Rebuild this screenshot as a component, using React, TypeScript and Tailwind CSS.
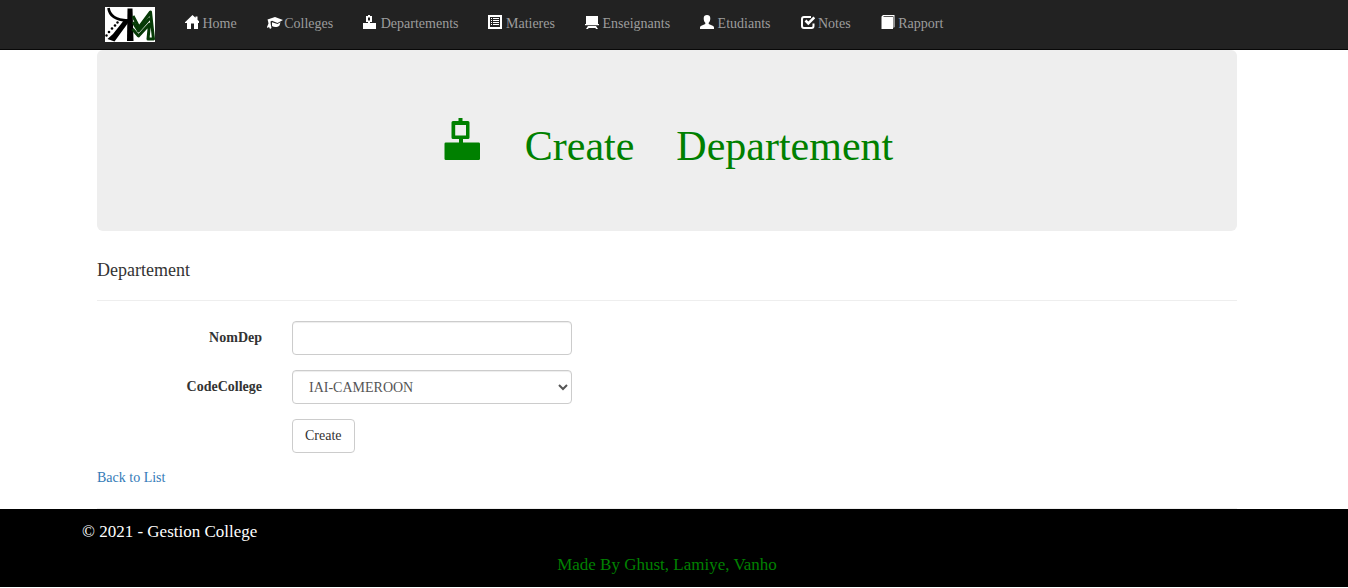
import type { ReactNode } from "react";

function Glyph({ children }: { children: ReactNode }) {
  return (
    <svg viewBox="0 0 14 14" className="mt-px h-3.5 w-3.5 shrink-0 text-white" fill="currentColor" aria-hidden="true">
      {children}
    </svg>
  );
}

const stampOutline =
  "M17.5 0h4v3h5.500a1.500 1.500 0 0 1 1.500 1.500v15a1.500 1.500 0 0 1-1.500 1.500h-5v3.500h15.700a1.300 1.300 0 0 1 1.300 1.300v14.900a1.300 1.300 0 0 1-1.300 1.300h-32.900a1.300 1.300 0 0 1-1.300-1.300v-14.900a1.300 1.300 0 0 1 1.300-1.300h13.200v-3.500h-6a1.500 1.500 0 0 1-1.500-1.500v-15a1.500 1.500 0 0 1 1.500-1.500h5.500zM14.200 7v10.500h10.800v-10.500z";

const links: { label: string; icon: ReactNode }[] = [
  {
    label: "Home",
    icon: (
      <Glyph>
        <path d="M7.500 0 10.500 2.700V1.500H12.500V4.700L15 7.300V8H13v6H9V8.500H6V14H2V8H0V7.300z" />
      </Glyph>
    ),
  },
  {
    label: "Colleges",
    icon: (
      <svg viewBox="0 0 17 14" className="mt-px -mr-[3px] h-3.5 w-[17px] shrink-0 text-white" fill="currentColor" aria-hidden="true">
        <path d="M.5 4.500 8 2l8 3-5.500 3L5 5.800 3.500 6.600l.3 2.900L4.500 13 3 14l-1-2-1.500 1-.5-1 1.500-3.500L1 6z" />
        <path d="M5 7.300 10.500 9 13.500 7.300 12.500 10.500C10.500 12.500 7 12.500 5 11z" />
      </svg>
    ),
  },
  {
    label: "Departements",
    icon: (
      <Glyph>
        <path fillRule="evenodd" d="M5 0h2v1h2v6H7v1h6v6H0V8h5V7H3V1h2zM5 2.500v3h2v-3z" />
      </Glyph>
    ),
  },
  {
    label: "Matieres",
    icon: (
      <Glyph>
        <path
          fillRule="evenodd"
          d="M0 0h14v14H0zM2 2v10h10V2zM3 3h1v1H3zM5 3h6v1H5zM3 5h1v1H3zM5 5h6v1H5zM3 7h1v1H3zM5 7h6v1H5zM3 9h1v1H3zM5 9h6v1H5z"
        />
      </Glyph>
    ),
  },
  {
    label: "Enseignants",
    icon: (
      <Glyph>
        <path d="M1 1h12v8H1zM0 9h14v1.300H0zM3 11h8l2 3h-2l-.6-1H3.600L3 14H1z" />
      </Glyph>
    ),
  },
  {
    label: "Etudiants",
    icon: (
      <Glyph>
        <path d="M7 0c2 0 3.300 1.200 3.300 3.200 0 2-.6 3.600-1.600 4.600v1.300l4.500 2c.5.300.8.900.8 1.500V14H0v-1.400c0-.6.300-1.200.8-1.500l4.500-2V7.800c-1-1-1.600-2.600-1.600-4.600C3.700 1.200 5 0 7 0z" />
      </Glyph>
    ),
  },
  {
    label: "Notes",
    icon: (
      <Glyph>
        <path
          d="M10 2H3a2 2 0 0 0-2 2v7a2 2 0 0 0 2 2h7.500a2 2 0 0 0 2-2V8.500"
          fill="none"
          stroke="currentColor"
          strokeWidth="2"
        />
        <path d="m4.500 5.500 2.800 2.800 6-6" fill="none" stroke="currentColor" strokeWidth="2.600" />
      </Glyph>
    ),
  },
  {
    label: "Rapport",
    icon: (
      <Glyph>
        <path d="M2 0h11.500v12l-1 1V1.200H3L2 2h10v12H.500V1.500z" />
      </Glyph>
    ),
  },
];

function Logo() {
  return (
    <svg viewBox="0 0 50 35" className="h-[35px] w-[50px]" role="img" aria-label="KM">
      <rect width="50" height="35" fill="#fff" />
      <path d="M3.500 1c1 8 7 12 19 12.500" fill="none" stroke="#000" strokeWidth="2.600" />
      <path d="M23 12v4L9.500 34.500 2.500 32 8 27l8-10 3-4z" fill="#000" />
      <path d="M22.500 1.500h5L28.500 34h-6.500z" fill="#000" />
      <g fill="#000">
        <circle cx="1.500" cy="28.500" r="1.200" />
        <circle cx="4" cy="25" r="1.300" />
        <circle cx="7" cy="21.500" r="1.300" />
        <circle cx="10" cy="18.500" r="1.300" />
        <circle cx="12.500" cy="15.500" r="1.200" />
      </g>
      <g fill="none" stroke="#063a06" strokeLinejoin="round">
        <path d="m28 9 6 11.500L45.500 5 48.500 32h-5.500l1.500-15-11 12-6-7" strokeWidth="3" />
        <path d="m28 15 5.500 9L45 11" strokeWidth="3" />
      </g>
    </svg>
  );
}

const field =
  "h-[34px] w-[280px] max-w-full rounded border border-[#ccc] bg-white px-3 py-1.5 text-sm text-[#555] shadow-[inset_0_1px_1px_rgba(0,0,0,0.075)]";

export default function App() {
  return (
    <div className="bg-white font-['Liberation_Serif','Times_New_Roman',serif] text-sm leading-5 text-[#333]">
      <header className="border-b border-[#080808] bg-[#222]">
        <nav className="mx-auto flex max-w-[1170px] items-start px-4">
          <a href="#" className="py-[7px] pr-[15px]">
            <Logo />
          </a>
          <ul className="flex">
            {links.map((link) => (
              <li key={link.label}>
                <a href="#" className="flex items-start px-[15px] pt-3.5 pb-[15px] text-[#9d9d9d]">
                  {link.icon}
                  <span>&nbsp;{link.label}</span>
                </a>
              </li>
            ))}
          </ul>
        </nav>
      </header>

      <div className="pr-3.5">
        <main className="mx-auto max-w-[1170px] px-[15px]">
          <h1 className="flex items-baseline justify-center gap-[42px] rounded-md bg-[#eee] pt-[68px] pb-[61px] text-[42px] leading-[48px] text-[green]">
            <svg viewBox="0 0 42 42" className="h-[42px] w-[42px]" fill="currentColor" aria-hidden="true">
              <path fillRule="evenodd" d={stampOutline} />
            </svg>
            <span>Create</span>
            <span>Departement</span>
          </h1>

          <h2 className="mt-[29px] text-lg leading-5">Departement</h2>
          <hr className="my-5 border-[#eee]" />

          <form className="flex flex-col gap-[15px]" onSubmit={(event) => event.preventDefault()}>
            <div className="flex gap-[30px]">
              <label htmlFor="nomDep" className="w-[165px] pt-[7px] text-right font-bold">
                NomDep
              </label>
              <input id="nomDep" type="text" className={field} />
            </div>
            <div className="flex gap-[30px]">
              <label htmlFor="codeCollege" className="w-[165px] pt-[7px] text-right font-bold">
                CodeCollege
              </label>
              <select id="codeCollege" className={field}>
                <option>IAI-CAMEROON</option>
              </select>
            </div>
            <div className="pl-[195px]">
              <button type="submit" className="rounded border border-[#ccc] bg-white px-3 py-1.5 text-[#333]">
                Create
              </button>
            </div>
          </form>

          <a href="#" className="mt-[15px] inline-block text-[#337ab7]">
            Back to List
          </a>
          <hr className="mt-5 border-[#eee]" />
        </main>
      </div>

      <footer className="bg-black pr-3.5 text-[17px] leading-[23px]">
        <div className="mx-auto flex max-w-[1170px] flex-col gap-2.5 pt-[11px] pb-[11px]">
          <p className="text-white">© 2021 - Gestion College</p>
          <p className="text-center text-[green]">Made By Ghust, Lamiye, Vanho</p>
        </div>
      </footer>
    </div>
  );
}
